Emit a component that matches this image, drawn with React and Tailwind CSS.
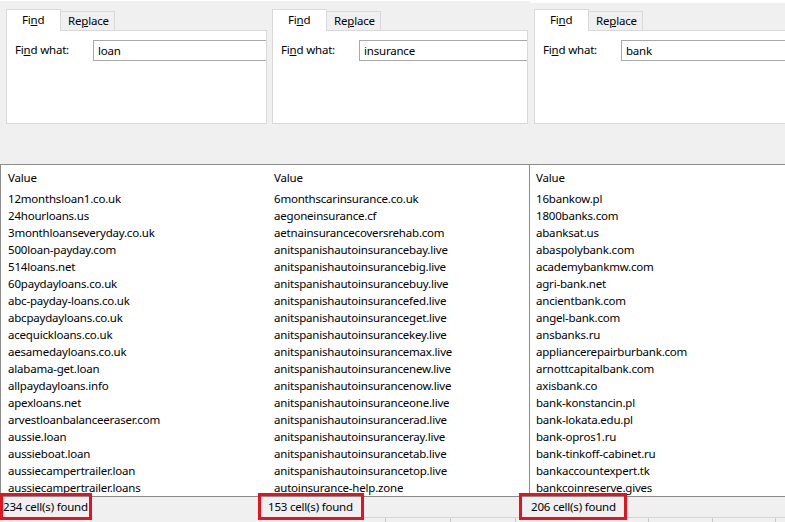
const loans = [
  '12monthsloan1.co.uk', '24hourloans.us', '3monthloanseveryday.co.uk', '500loan-payday.com',
  '514loans.net', '60paydayloans.co.uk', 'abc-payday-loans.co.uk', 'abcpaydayloans.co.uk',
  'acequickloans.co.uk', 'aesamedayloans.co.uk', 'alabama-get.loan', 'allpaydayloans.info',
  'apexloans.net', 'arvestloanbalanceeraser.com', 'aussie.loan', 'aussieboat.loan',
  'aussiecampertrailer.loan', 'aussiecampertrailer.loans',
];

const insurance = [
  '6monthscarinsurance.co.uk', 'aegoneinsurance.cf', 'aetnainsurancecoversrehab.com',
  'anitspanishautoinsurancebay.live', 'anitspanishautoinsurancebig.live', 'anitspanishautoinsurancebuy.live',
  'anitspanishautoinsurancefed.live', 'anitspanishautoinsuranceget.live', 'anitspanishautoinsurancekey.live',
  'anitspanishautoinsurancemax.live', 'anitspanishautoinsurancenew.live', 'anitspanishautoinsurancenow.live',
  'anitspanishautoinsuranceone.live', 'anitspanishautoinsurancerad.live', 'anitspanishautoinsuranceray.live',
  'anitspanishautoinsurancetab.live', 'anitspanishautoinsurancetop.live', 'autoinsurance-help.zone',
];

const banks = [
  '16bankow.pl', '1800banks.com', 'abanksat.us', 'abaspolybank.com', 'academybankmw.com',
  'agri-bank.net', 'ancientbank.com', 'angel-bank.com', 'ansbanks.ru', 'appliancerepairburbank.com',
  'arnottcapitalbank.com', 'axisbank.co', 'bank-konstancin.pl', 'bank-lokata.edu.pl', 'bank-opros1.ru',
  'bank-tinkoff-cabinet.ru', 'bankaccountexpert.tk', 'bankcoinreserve.gives',
];

// one "Find" dialog slice
function FindPanel({ term, className }) {
  return (
    <div className={className}>
      <div className="flex items-end h-[30px] pt-[8px]">
        <div className="relative z-10 w-[55px] h-[22px] bg-white border border-b-0 border-[#d9d9d9] pl-[15px] leading-[20px]">
          Fi<u>n</u>d
        </div>
        <div className="w-[54px] h-[19px] mb-[1px] bg-[#f0f0f0] border border-b-0 border-l-0 border-[#d9d9d9] pl-[7px] leading-[18px]">
          Re<u>p</u>lace
        </div>
      </div>
      <div className="-mt-[1px] h-[94px] bg-white border border-[#d9d9d9] pt-[9px] flex items-start">
        <span className="w-[86px] pl-[8px] leading-[20px]">Fi<u>n</u>d what:</span>
        <div className="flex-1 h-[21px] border border-r-0 border-[#a9a9a9] pl-[4px] leading-[19px]">{term}</div>
      </div>
    </div>
  );
}

function Column({ items, className }) {
  return (
    <div className={className}>
      <div className="h-[17px] leading-[17px] mt-[4px]">Value</div>
      <div className="mt-[4px]">
        {items.map(v => (
          <div key={v} className="h-[17px] leading-[17px] whitespace-nowrap">{v}</div>
        ))}
      </div>
    </div>
  );
}

function Found({ count, className }) {
  return (
    <div className={className}>
      <span className="block h-[27px] border-[3px] border-[#e5121f] leading-[21px] whitespace-nowrap">
        {count} cell(s) found
      </span>
    </div>
  );
}

export default function App() {
  return (
    <div
      className="w-[785px] h-[522px] overflow-hidden bg-[#f0f0f0] text-black text-[11.5px] tracking-[-0.2px] flex flex-col"
      style={{ fontFamily: '"Noto Sans", "Open Sans", sans-serif' }}
    >
      {/* dialogs */}
      <div className="h-[164px] flex shrink-0">
        <div className="w-[270px] border-t border-white pl-[6px] pr-[3px]">
          <FindPanel term="loan" />
        </div>
        <div className="w-[261px] border-t border-white pl-[2px] pr-[3px]">
          <FindPanel term="insurance" />
        </div>
        <div className="flex-1 border-t-[3px] border-white pl-[3px]">
          <FindPanel term="bank" className="-mt-[2px] -mr-[4px]" />
        </div>
      </div>

      {/* results */}
      <div className="h-[333px] shrink-0 bg-white border-t border-l border-b border-[#8c8c8c] flex">
        <Column items={loans} className="w-[266px] pl-[7px]" />
        <Column items={insurance} className="w-[262px] pl-[7px]" />
        <Column items={banks} className="flex-1 border-l border-[#8c8c8c] pl-[6px]" />
      </div>

      {/* status */}
      <div className="relative flex-1 flex items-start">
        <div className="absolute left-[260px] right-0 bottom-0 h-[5px] border-t border-[#d6d6d6]">
          {[125, 190, 255, 388, 452, 515].map(x => (
            <span key={x} className="absolute top-0 bottom-0 w-px bg-[#c8c8c8]" style={{ left: x }} />
          ))}
        </div>
        <Found count={234} className="relative -mt-[4px] w-[92px]" />
        <Found count={153} className="relative -mt-[4px] ml-[166px] w-[106px] [&>span]:pl-[7px]" />
        <Found count={206} className="relative -mt-[4px] ml-[155px] w-[108px] [&>span]:pl-[9px]" />
      </div>
    </div>
  );
}
